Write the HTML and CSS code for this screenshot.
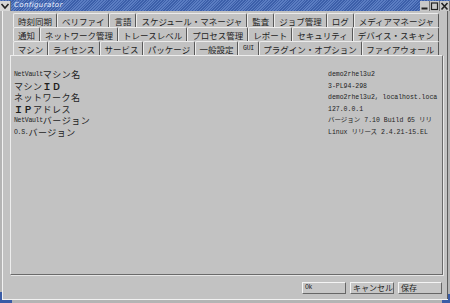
FILE: index.html
```html
<!DOCTYPE html>
<html lang="ja">
<head>
  <meta charset="UTF-8" />
  <title>Configurator</title>
  <link rel="stylesheet" href="styles.css">
</head>
<body>
  <div class="window">
    <div class="titlebar">
      <span class="wm-btn menu">
        <svg width="10" height="10" viewBox="0 0 10 10"><path d="M1.5 3 L5 7 L8.5 3" fill="none" stroke="#222" stroke-width="1.6"/></svg>
      </span>
      <span class="title">Configurator</span>
      <span class="wm-btn">
        <svg width="9" height="10" viewBox="0 0 9 10"><rect x="1.5" y="6.5" width="6" height="2" fill="#222"/></svg>
      </span>
      <span class="wm-btn">
        <svg width="9" height="10" viewBox="0 0 9 10"><rect x="1.5" y="2" width="6" height="6.5" fill="none" stroke="#222" stroke-width="1.2"/></svg>
      </span>
      <span class="wm-btn">
        <svg width="9" height="10" viewBox="0 0 9 10"><path d="M1.5 2 L7.5 8.5 M7.5 2 L1.5 8.5" stroke="#222" stroke-width="1.6"/></svg>
      </span>
    </div>

    <div class="main">
      <div class="tabs">
        <div class="tab-row">
          <div class="tab">時刻同期</div>
          <div class="tab">ベリファイ</div>
          <div class="tab">言語</div>
          <div class="tab">スケジュール・マネージャ</div>
          <div class="tab">監査</div>
          <div class="tab">ジョブ管理</div>
          <div class="tab">ログ</div>
          <div class="tab">メディアマネージャ</div>
        </div>
        <div class="tab-row">
          <div class="tab">通知</div>
          <div class="tab">ネットワーク管理</div>
          <div class="tab">トレースレベル</div>
          <div class="tab">プロセス管理</div>
          <div class="tab">レポート</div>
          <div class="tab">セキュリティ</div>
          <div class="tab">デバイス・スキャン</div>
        </div>
        <div class="tab-row front">
          <div class="tab selected">マシン</div>
          <div class="tab">ライセンス</div>
          <div class="tab">サービス</div>
          <div class="tab">パッケージ</div>
          <div class="tab">一般設定</div>
          <div class="tab"><span class="lat">GUI</span></div>
          <div class="tab">プラグイン・オプション</div>
          <div class="tab">ファイアウォール</div>
        </div>
      </div>

      <div class="panel">
        <div class="info">
          <div class="label"><span class="lat">NetVault</span>マシン名</div>
          <div class="value">demo2rhel3u2</div>
          <div class="label">マシン<b>ＩＤ</b></div>
          <div class="value">3-PL94-298</div>
          <div class="label">ネットワーク名</div>
          <div class="value">demo2rhel3u2, localhost.loca</div>
          <div class="label"><b>ＩＰ</b>アドレス</div>
          <div class="value">127.0.0.1</div>
          <div class="label"><span class="lat">NetVault</span>バージョン</div>
          <div class="value">バージョン 7.10 Build 65 リリ</div>
          <div class="label"><span class="lat">O.S.</span>バージョン</div>
          <div class="value">Linux リリース 2.4.21-15.EL</div>
        </div>
      </div>

      <div class="buttons">
        <button class="btn"><span class="lat">Ok</span></button>
        <button class="btn">キャンセル</button>
        <button class="btn">保存</button>
      </div>
    </div>

    <span class="corner corner-bl"></span>
    <span class="corner corner-br"></span>
  </div>
</body>
</html>
```

FILE: styles.css
```css
body { margin: 0; background: #c2c2c2; font-family: "Noto Sans CJK JP", sans-serif; color: #1e1e1e; }

.window {
  position: relative;
  width: 450px; height: 303px;
  box-sizing: border-box;
  background: #c2c2c2;
  display: flex; flex-direction: column;
  overflow: hidden;
  box-shadow: inset 2px 0 0 #b4b4b4, inset 3px 0 0 #f2f2f2,
              inset 0 -3px 0 #b4b4b4, inset 0 -4px 0 #f2f2f2,
              inset -2px 0 0 #b4b4b4, inset -3px 0 0 #5c5c5c;
}

/* title bar */
.titlebar {
  height: 11px; flex: none;
  display: flex; align-items: center;
  background: repeating-linear-gradient(-45deg, #3c5fa9 0 1px, #5b7dc2 1px 2px);
}
.wm-btn {
  width: 9px; height: 10px; flex: none;
  display: flex; align-items: center; justify-content: center;
  background: #c8c8c8;
  border-right: 1px solid #777;
}
.wm-btn.menu { width: 10px; background: #d6d6d6; }
.title {
  flex: 1;
  padding-left: 3px;
  font-family: "DejaVu Sans", sans-serif;
  font-size: 7px; font-style: italic; letter-spacing: 0.4px;
  color: #eef2ff;
  line-height: 11px;
}

/* main */
.main {
  flex: 1;
  display: flex; flex-direction: column;
  padding: 2px 7px 0 10px;
}

.tabs { margin: 0 4px 0 3px; }
.tab-row { display: flex; height: 14px; }
.tab {
  flex: 1 1 auto;
  display: flex; align-items: center; justify-content: center;
  padding: 0 2px;
  font-size: 8.5px; line-height: 14px;
  white-space: nowrap;
  border-left: 1px solid #ececec;
  border-top: 1px solid #ececec;
  border-right: 1px solid #585858;
  border-radius: 2px 2px 0 0;
  box-sizing: border-box;
}
.tab.selected { background: #c6c6c6; }

.lat { font-family: "Liberation Mono", monospace; font-size: 6.5px; letter-spacing: -0.3px; }

/* content panel */
.panel {
  height: 220px; flex: none;
  box-sizing: border-box;
  border-top: 1px solid #ededed;
  border-left: 1px solid #ededed;
  border-right: 1px solid #6a6a6a;
  border-bottom: 1px solid #6a6a6a;
  box-shadow: 1px 1px 0 #e6e6e6;
  padding: 13px 4px 0 3px;
  overflow: hidden;
}
.info {
  display: grid;
  grid-template-columns: 314px 1fr;
  grid-auto-rows: 11.5px;
  align-items: center;
}
.label, .value {
  height: 11.5px; line-height: 11.5px;
  display: flex; align-items: center;
  white-space: nowrap; overflow: hidden;
}
.label { font-size: 9px; letter-spacing: 0.5px; }
.label b { font-weight: bold; }
.value {
  font-family: "Liberation Mono", "Noto Sans CJK JP", monospace;
  font-size: 6.5px;
}

/* buttons */
.buttons {
  display: flex; justify-content: flex-end; gap: 4px;
  margin-top: 7px; padding-right: 1px;
}
.btn {
  width: 44px; height: 12px;
  margin: 0; padding: 0 0 0 2px;
  display: flex; align-items: center;
  white-space: nowrap; overflow: hidden;
  font-family: "Noto Sans CJK JP", sans-serif;
  font-size: 8px; line-height: 10px;
  color: #1e1e1e;
  background: #c6c6c6;
  border: 1px solid;
  border-color: #f4f4f4 #666 #666 #f4f4f4;
}

/* window manager resize corners */
.corner { position: absolute; bottom: 0; border-color: #3a5ca6; border-style: solid; }
.corner-bl { left: 0; width: 10px; height: 8px; border-width: 0 0 3px 2px; }
.corner-br { right: 0; width: 6px; height: 6px; border-width: 0 2px 3px 0; }
```
